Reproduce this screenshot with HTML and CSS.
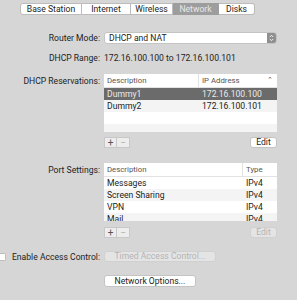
FILE: index.html
```html
<!DOCTYPE html>
<html lang="en">
<head>
  <meta charset="UTF-8" />
  <title>Network</title>
  <link rel="stylesheet" href="styles.css">
</head>
<body>
  <div class="tabs">
    <div class="tab tab-base">Base Station</div>
    <div class="tab tab-internet">Internet</div>
    <div class="tab tab-wireless">Wireless</div>
    <div class="tab tab-network active">Network</div>
    <div class="tab tab-disks">Disks</div>
  </div>

  <div class="form">
    <div class="row row-mode">
      <div class="label">Router Mode:</div>
      <div class="popup">
        <span>DHCP and NAT</span>
        <span class="stepper">
          <svg width="5" height="8" viewBox="0 0 5 8"><path d="M0.8 3 L2.5 1.3 L4.2 3 M0.8 5 L2.5 6.7 L4.2 5" fill="none" stroke="#fff" stroke-width="0.9"/></svg>
        </span>
      </div>
    </div>

    <div class="row row-range">
      <div class="label">DHCP Range:</div>
      <div class="value">172.16.100.100 to 172.16.100.101</div>
    </div>

    <div class="row row-top row-res">
      <div class="label label-top">DHCP Reservations:</div>
      <div class="table table-res">
        <div class="thead">
          <div class="th col-desc">Description</div>
          <div class="th col-ip">IP Address <span class="sort">&#8963;</span></div>
        </div>
        <div class="tbody">
          <div class="tr selected"><div class="td col-desc">Dummy1</div><div class="td col-ip">172.16.100.100</div></div>
          <div class="tr alt"><div class="td col-desc">Dummy2</div><div class="td col-ip">172.16.100.101</div></div>
          <div class="tr"></div>
          <div class="tr alt"></div>
        </div>
      </div>
    </div>

    <div class="row row-tools">
      <div class="label"></div>
      <div class="tools">
        <div class="pm">
          <span class="pm-btn">+</span><span class="pm-btn dim">&minus;</span>
        </div>
        <button class="btn btn-edit">Edit</button>
      </div>
    </div>

    <div class="row row-top row-ports">
      <div class="label label-top">Port Settings:</div>
      <div class="table table-ports">
        <div class="thead">
          <div class="th col-name">Description</div>
          <div class="th col-type">Type</div>
        </div>
        <div class="tbody">
          <div class="tr"><div class="td col-name">Messages</div><div class="td col-type">IPv4</div></div>
          <div class="tr alt"><div class="td col-name">Screen Sharing</div><div class="td col-type">IPv4</div></div>
          <div class="tr"><div class="td col-name">VPN</div><div class="td col-type">IPv4</div></div>
          <div class="tr alt"><div class="td col-name">Mail</div><div class="td col-type">IPv4</div></div>
        </div>
      </div>
    </div>

    <div class="row row-tools row-tools2">
      <div class="label"></div>
      <div class="tools">
        <div class="pm">
          <span class="pm-btn">+</span><span class="pm-btn dim">&minus;</span>
        </div>
        <button class="btn btn-edit disabled">Edit</button>
      </div>
    </div>

    <div class="row row-access">
      <div class="label label-check"><span class="checkbox"></span><span>Enable Access Control:</span></div>
      <button class="btn btn-timed disabled">Timed Access Control...</button>
    </div>

    <div class="row row-options">
      <div class="label"></div>
      <button class="btn btn-options">Network Options...</button>
    </div>
  </div>
</body>
</html>
```

FILE: styles.css
```css
* {
  box-sizing: border-box;
  margin: 0;
  padding: 0;
}

body {
  font-family: 'Roboto', 'Liberation Sans', sans-serif;
  font-size: 8.6px;
  color: #222;
  background-color: #d6d6d6;
  width: 297px;
  height: 300px;
  overflow: hidden;
}

.tabs {
  display: flex;
  margin: 3px 0 0 20px;
  height: 12px;
}

.tab {
  height: 12px;
  line-height: 10px;
  text-align: center;
  background: #fff;
  border: 1px solid #bcbcbc;
  border-left: none;
  color: #222;
  white-space: nowrap;
}

.tab-base { width: 62px; border-left: 1px solid #bcbcbc; border-radius: 3px 0 0 3px; }
.tab-internet { width: 49px; }
.tab-wireless { width: 42px; }
.tab-network { width: 46px; }
.tab-disks { width: 36px; border-radius: 0 3px 3px 0; }

.tab.active {
  background: #9d9d9d;
  border-color: #9d9d9d;
  color: #e8e8e8;
}

.form {
  display: flex;
  flex-direction: column;
}

.row {
  display: flex;
  align-items: center;
}

.row-top {
  align-items: flex-start;
}

.label {
  width: 104px;
  flex-shrink: 0;
  text-align: right;
  padding-right: 4px;
  color: #222;
  white-space: nowrap;
}

.label-top {
  padding-top: 2px;
}

.row-mode { margin-top: 17px; }

.popup {
  width: 173px;
  height: 12px;
  background: #fff;
  border: 1px solid #c4c4c4;
  border-radius: 3px;
  display: flex;
  align-items: center;
  justify-content: space-between;
  padding-left: 4px;
  overflow: hidden;
}

.stepper {
  width: 9px;
  height: 12px;
  background: #8f8f8f;
  display: flex;
  align-items: center;
  justify-content: center;
}

.row-range { margin-top: 7px; height: 13px; }

.row-res { margin-top: 10px; }

.table {
  width: 173px;
  background: #fff;
  overflow: hidden;
}

.table-res { height: 58px; }
.table-ports { height: 58px; }

.thead {
  display: flex;
  height: 14px;
  border-bottom: 1px solid #e2e2e2;
  font-size: 7.8px;
  color: #555;
}

.th {
  line-height: 13px;
  padding-left: 3px;
}

.col-desc { width: 95px; }
.col-ip { flex: 1; }
.col-name { width: 139px; }
.col-type { flex: 1; }

.thead .col-desc,
.thead .col-name {
  border-right: 1px solid #e2e2e2;
}

.sort {
  float: right;
  margin-right: 4px;
  font-size: 7px;
  line-height: 13px;
}

.tr {
  display: flex;
  height: 12px;
}

.tr.alt {
  background: #f4f4f4;
}

.tr.selected {
  background: #6b6b6b;
  color: #eaeaea;
}

.td {
  line-height: 12px;
  padding-left: 3px;
  white-space: nowrap;
}

.row-tools { margin-top: 5px; }

.tools {
  width: 173px;
  display: flex;
  justify-content: space-between;
  align-items: center;
}

.pm {
  display: flex;
}

.pm-btn {
  width: 13px;
  height: 11px;
  background: #ededed;
  border: 1px solid #c8c8c8;
  text-align: center;
  line-height: 9px;
  font-size: 10px;
  color: #555;
}

.pm-btn + .pm-btn {
  border-left: none;
}

.pm-btn.dim {
  color: #b0b0b0;
}

.btn {
  font-family: inherit;
  font-size: 8.6px;
  height: 11px;
  line-height: 9px;
  background: #fff;
  border: 1px solid #c4c4c4;
  border-radius: 3px;
  color: #222;
  white-space: nowrap;
}

.btn-edit {
  width: 27px;
}

.btn.disabled {
  background: #e4e4e4;
  color: #b4b4b4;
  border-color: #d0d0d0;
}

.row-ports { margin-top: 15px; }

.row-tools2 { margin-top: 6px; }

.row-access { margin-top: 13px; }

.label-check {
  display: flex;
  align-items: center;
  justify-content: space-between;
}

.checkbox {
  width: 6px;
  height: 8px;
  background: #fff;
  border: 1px solid #bdbdbd;
  border-left: none;
  border-radius: 0 2px 2px 0;
}

.btn-timed {
  width: 112px;
}

.row-options { margin-top: 13px; }

.btn-options {
  width: 92px;
  height: 12px;
  line-height: 10px;
}
```
